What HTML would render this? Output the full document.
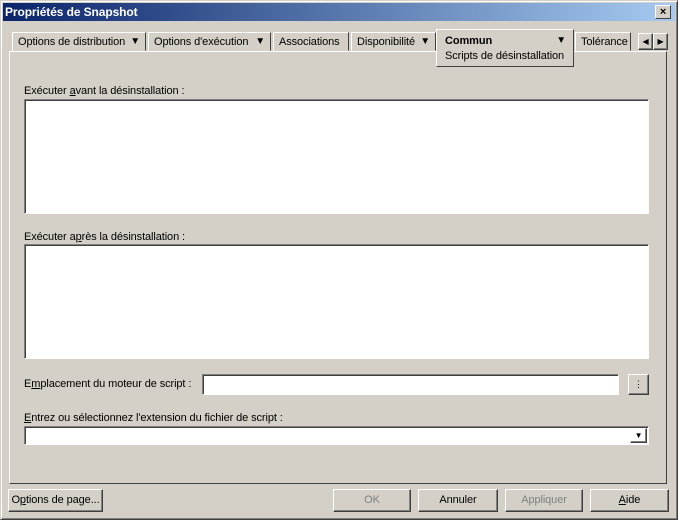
<!DOCTYPE html>
<html><head><meta charset="utf-8"><style>
body{margin:0;width:678px;height:520px;background:#d4d0c8;font-family:"Liberation Sans",Arial,sans-serif;font-size:11px;letter-spacing:-0.1px;color:#000;position:relative;overflow:hidden}
.a{position:absolute}
.win{left:0;top:0;width:676px;height:518px;border:1px solid;border-color:#d4d0c8 #404040 #404040 #d4d0c8;box-shadow:inset 1px 1px #fff,inset -1px -1px #808080}
.title{left:3px;top:3px;width:672px;height:18px;background:linear-gradient(90deg,#0a246a,#a6caf0);color:#fff;font-weight:bold;font-size:12px;line-height:18px}
.close{left:655px;top:5px;width:16px;height:14px;background:#d4d0c8;border:1px solid;border-color:#fff #404040 #404040 #fff;box-sizing:border-box;font-size:11px;line-height:12px;text-align:center;font-weight:bold}
.tab{top:32px;height:19px;border:1px solid;border-color:#fff #404040 transparent #fff;line-height:18px;padding-left:5px;box-sizing:border-box;white-space:nowrap;overflow:hidden}
.arr{font-size:10px;position:absolute;right:5px;top:0}
.panel{left:9px;top:51px;width:658px;height:433px;border:1px solid;border-color:#fff #404040 #404040 #fff;box-sizing:border-box}
.sunk{background:#fff;border:1px solid;border-color:#808080 #fff #fff #808080;box-shadow:inset 1px 1px #404040;box-sizing:border-box}
.btn{height:23px;border:1px solid;border-color:#fff #404040 #404040 #fff;box-shadow:inset -1px -1px #808080;box-sizing:border-box;text-align:center;line-height:21px}
u{text-decoration:underline}
</style></head><body>
<div class="a win"></div>
<div class="a title"><span style="padding-left:2px">Propriétés de Snapshot</span></div>
<div class="a close">×</div>

<div class="a tab" style="left:12px;width:134px">Options de distribution<span class="arr">▼</span></div>
<div class="a tab" style="left:148px;width:123px">Options d'exécution<span class="arr">▼</span></div>
<div class="a tab" style="left:273px;width:76px">Associations</div>
<div class="a tab" style="left:351px;width:85px">Disponibilité<span class="arr">▼</span></div>
<div class="a tab" style="left:575px;width:56px">Tolérance</div>
<div class="a panel"></div>
<div class="a" style="left:436px;top:29px;width:138px;height:38px;background:#d4d0c8;border:1px solid;border-color:#fff #404040 #404040 #fff;box-sizing:border-box">
<div style="position:absolute;left:8px;top:5px;font-weight:bold">Commun</div>
<div style="position:absolute;right:7px;top:5px;font-size:10px">▼</div>
<div style="position:absolute;left:8px;top:20px">Scripts de désinstallation</div></div>
<div class="a btn" style="left:638px;top:33px;width:15px;height:17px;line-height:15px;font-size:8px">◀</div>
<div class="a btn" style="left:653px;top:33px;width:15px;height:17px;line-height:15px;font-size:8px">▶</div>

<div class="a" style="left:24px;top:85px">Exécuter <u>a</u>vant la désinstallation :</div>
<div class="a sunk" style="left:24px;top:99px;width:625px;height:115px"></div>
<div class="a" style="left:24px;top:231px">Exécuter a<u>p</u>rès la désinstallation :</div>
<div class="a sunk" style="left:24px;top:244px;width:625px;height:115px"></div>
<div class="a" style="left:24px;top:378px">E<u>m</u>placement du moteur de script :</div>
<div class="a sunk" style="left:202px;top:374px;width:417px;height:21px"></div>
<div class="a btn" style="left:628px;top:374px;width:21px;height:21px;font-size:9px;line-height:19px">⋮</div>
<div class="a" style="left:24px;top:412px"><u>E</u>ntrez ou sélectionnez l'extension du fichier de script :</div>
<div class="a sunk" style="left:24px;top:426px;width:625px;height:19px"></div>
<div class="a btn" style="left:630px;top:428px;width:17px;height:15px;line-height:13px;font-size:8px">▼</div>

<div class="a btn" style="left:8px;top:489px;width:95px">O<u>p</u>tions de page...</div>
<div class="a btn" style="left:333px;top:489px;width:78px;color:#808080">OK</div>
<div class="a btn" style="left:418px;top:489px;width:80px">Annuler</div>
<div class="a btn" style="left:505px;top:489px;width:78px;color:#808080">Appliquer</div>
<div class="a btn" style="left:590px;top:489px;width:79px"><u>A</u>ide</div>
</body></html>
